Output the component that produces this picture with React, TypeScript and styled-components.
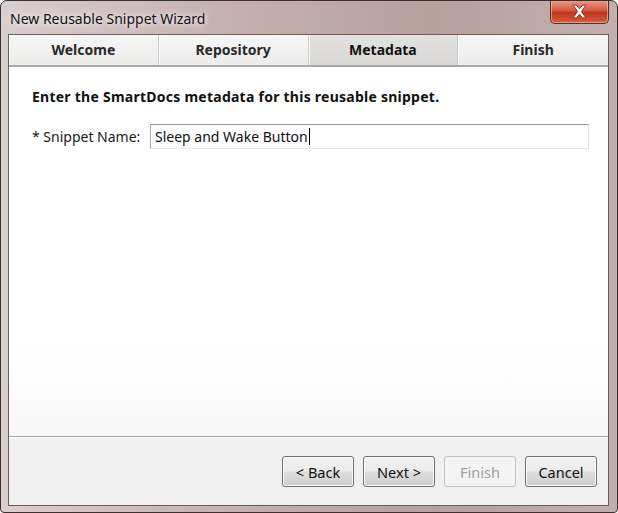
import React from "react";
import styled, { createGlobalStyle } from "styled-components";

const GlobalStyle = createGlobalStyle`
  html, body {
    margin: 0;
    padding: 0;
    background: #ffffff;
  }
  body {
    font-family: "Noto Sans", "Open Sans", "Liberation Sans", sans-serif;
  }
`;

const Window = styled.div`
  width: 618px;
  height: 513px;
  box-sizing: border-box;
  display: flex;
  flex-direction: column;
  border: 1px solid #3a3030;
  border-radius: 7px 7px 4px 4px;
  background: linear-gradient(90deg, #d9cfce 0%, #c6b2b0 35%, #b8a09d 70%, #c2b0ae 100%);
  overflow: hidden;
`;

const TitleBar = styled.div`
  height: 33px;
  display: flex;
  align-items: flex-start;
  justify-content: space-between;
  padding-left: 9px;
  padding-right: 8px;
`;

const Title = styled.div`
  margin-top: 8px;
  font-size: 14px;
  color: #111;
  text-shadow: 0 0 8px #f4eeee, 0 0 4px #f4eeee;
`;

const CloseButton = styled.div`
  width: 57px;
  height: 23px;
  margin-top: -1px;
  display: flex;
  align-items: center;
  justify-content: center;
  border: 1px solid #5a2a24;
  border-top: none;
  border-radius: 0 0 5px 5px;
  background: linear-gradient(180deg, #e8a08e 0%, #d65a3e 45%, #c0361c 55%, #d4613f 100%);
  box-shadow: inset 0 0 0 1px rgba(255, 220, 210, 0.5);
`;

const Client = styled.div`
  flex: 1;
  margin: 0 8px 6px 7px;
  display: flex;
  flex-direction: column;
  border: 1px solid #6d5d5b;
  background: #f0f0f0;
`;

const Tabs = styled.div`
  display: grid;
  grid-template-columns: repeat(4, 1fr);
  height: 30px;
  border-bottom: 2px solid #a9a9a9;
`;

const Tab = styled.div<{ $active?: boolean }>`
  display: flex;
  align-items: center;
  justify-content: center;
  padding-bottom: 1px;
  font-size: 14px;
  font-weight: bold;
  color: ${(p) => (p.$active ? "#111" : "#2a2a2a")};
  background: ${(p) =>
    p.$active
      ? "linear-gradient(180deg, #e3e2df 0%, #d9d8d5 100%)"
      : "linear-gradient(180deg, #f6f6f6 0%, #ececeb 100%)"};
  border-right: 1px solid #c8c8c8;
  box-shadow: inset 1px 0 0 #ffffff;
  &:last-child {
    border-right: none;
  }
`;

const Content = styled.div`
  flex: 1;
  padding: 20px 19px 0 23px;
  background: linear-gradient(180deg, #ffffff 0%, #ffffff 75%, #f7f7f7 100%);
  border-bottom: 1px solid #a8a8a8;
`;

const Heading = styled.div`
  font-size: 14px;
  font-weight: bold;
  letter-spacing: 0.25px;
  color: #111;
  margin-bottom: 18px;
`;

const FieldRow = styled.div`
  display: flex;
  align-items: center;
`;

const Label = styled.label`
  width: 118px;
  font-size: 14px;
  color: #1a1a1a;
`;

const TextBox = styled.div`
  flex: 1;
  height: 25px;
  box-sizing: border-box;
  display: flex;
  align-items: center;
  padding-left: 4px;
  font-size: 14px;
  color: #111;
  border: 1px solid #abadb3;
  border-top-color: #9a9a9a;
  border-right-color: #dbdfe6;
  border-bottom-color: #e3e9ef;
  background: #fff;
`;

const Caret = styled.span`
  display: inline-block;
  width: 1px;
  height: 17px;
  background: #000;
  margin-left: 1px;
`;

const Footer = styled.div`
  height: 67px;
  display: flex;
  align-items: center;
  justify-content: flex-end;
  gap: 9px;
  padding-right: 11px;
  background: #f0f0f0;
  border-top: 1px solid #ffffff;
`;

const Button = styled.button<{ $disabled?: boolean }>`
  width: 72px;
  height: 31px;
  box-sizing: border-box;
  font-family: "Noto Sans", "Open Sans", "Liberation Sans", sans-serif;
  font-size: 14.5px;
  color: ${(p) => (p.$disabled ? "#a0a0a0" : "#111")};
  border: 1px solid ${(p) => (p.$disabled ? "#c5c5c5" : "#707070")};
  border-radius: 3px;
  background: ${(p) =>
    p.$disabled
      ? "#f4f4f4"
      : "linear-gradient(180deg, #f2f2f2 0%, #ebebeb 48%, #dddddd 52%, #cfcfcf 100%)"};
  box-shadow: ${(p) => (p.$disabled ? "none" : "inset 0 0 0 1px #fcfcfc")};
  padding: 0;
  cursor: default;
`;

const tabs = ["Welcome", "Repository", "Metadata", "Finish"];

export default function App() {
  return (
    <>
      <GlobalStyle />
      <Window>
        <TitleBar>
          <Title>New Reusable Snippet Wizard</Title>
          <CloseButton>
            <svg width="17" height="15" viewBox="0 0 16 14">
              <path
                d="M2 1 L5 1 L8 4.5 L11 1 L14 1 L9.8 7 L14 13 L11 13 L8 9.5 L5 13 L2 13 L6.2 7 Z"
                fill="#ffffff"
                stroke="#6b2a20"
                strokeWidth="0.8"
              />
            </svg>
          </CloseButton>
        </TitleBar>
        <Client>
          <Tabs>
            {tabs.map((t) => (
              <Tab key={t} $active={t === "Metadata"}>
                {t}
              </Tab>
            ))}
          </Tabs>
          <Content>
            <Heading>Enter the SmartDocs metadata for this reusable snippet.</Heading>
            <FieldRow>
              <Label>* Snippet Name:</Label>
              <TextBox>
                Sleep and Wake Button
                <Caret />
              </TextBox>
            </FieldRow>
          </Content>
          <Footer>
            <Button>&lt; Back</Button>
            <Button>Next &gt;</Button>
            <Button $disabled>Finish</Button>
            <Button>Cancel</Button>
          </Footer>
        </Client>
      </Window>
    </>
  );
}
